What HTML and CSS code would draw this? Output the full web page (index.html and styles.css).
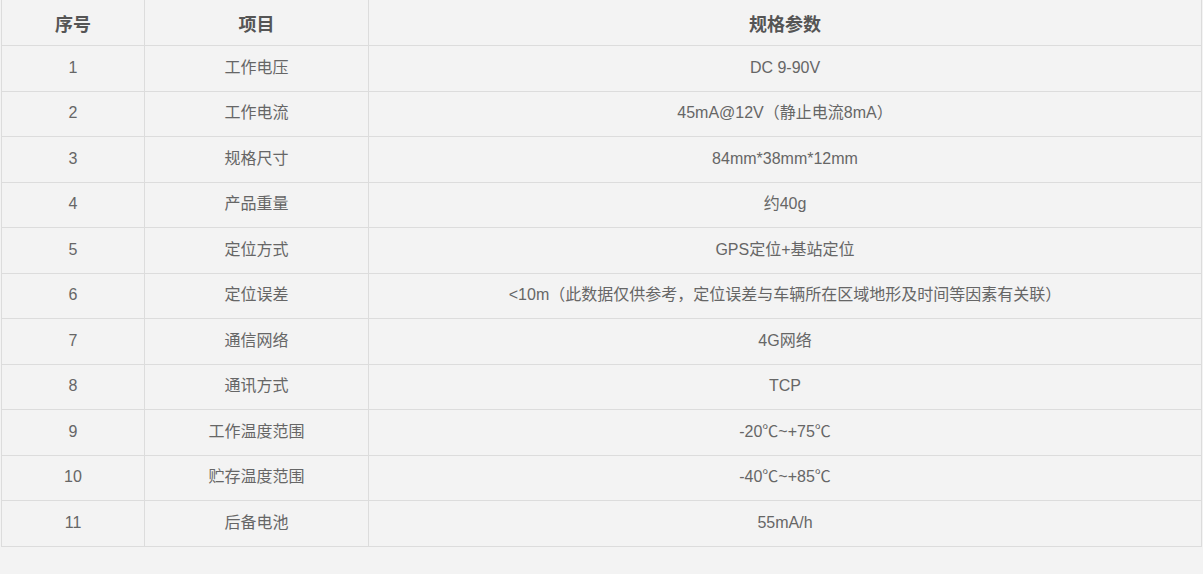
FILE: index.html
```html
<!DOCTYPE html>
<html lang="zh-CN">
<head>
<meta charset="utf-8">
<link rel="stylesheet" href="styles.css">
</head>
<body>
<table class="spec">
  <colgroup>
    <col class="c1"><col class="c2"><col class="c3">
  </colgroup>
  <thead>
    <tr><th>序号</th><th>项目</th><th>规格参数</th></tr>
  </thead>
  <tbody>
    <tr><td>1</td><td>工作电压</td><td>DC 9-90V</td></tr>
    <tr><td>2</td><td>工作电流</td><td>45mA@12V（静止电流8mA）</td></tr>
    <tr><td>3</td><td>规格尺寸</td><td>84mm*38mm*12mm</td></tr>
    <tr><td>4</td><td>产品重量</td><td>约40g</td></tr>
    <tr><td>5</td><td>定位方式</td><td>GPS定位+基站定位</td></tr>
    <tr><td>6</td><td>定位误差</td><td>&lt;10m（此数据仅供参考，定位误差与车辆所在区域地形及时间等因素有关联）</td></tr>
    <tr><td>7</td><td>通信网络</td><td>4G网络</td></tr>
    <tr><td>8</td><td>通讯方式</td><td>TCP</td></tr>
    <tr><td>9</td><td>工作温度范围</td><td>-20℃~+75℃</td></tr>
    <tr><td>10</td><td>贮存温度范围</td><td>-40℃~+85℃</td></tr>
    <tr><td>11</td><td>后备电池</td><td>55mA/h</td></tr>
  </tbody>
</table>
</body>
</html>
```
FILE: styles.css
```css
html, body {
  margin: 0;
  padding: 0;
  background: #f3f3f3;
}
body {
  font-family: "Liberation Sans", Arial, "Noto Sans CJK SC", sans-serif;
  font-size: 16px;
  color: #666;
}
.spec {
  border-collapse: collapse;
  width: 1201px;
  margin: -0.5px 0 0 1px;
  table-layout: fixed;
}
.c1 { width: 143px; }
.c2 { width: 224px; }
.spec th, .spec td {
  border: 1px solid #dcdcdc;
  text-align: center;
  vertical-align: middle;
  padding: 0;
  height: 45.5px;
  box-sizing: border-box;
}
.spec td {
  line-height: 20px;
  padding-bottom: 1px;
}
.spec th {
  font-size: 18px;
  font-weight: bold;
  color: #555;
  height: 45.5px;
  border-top-color: transparent;
}
```
